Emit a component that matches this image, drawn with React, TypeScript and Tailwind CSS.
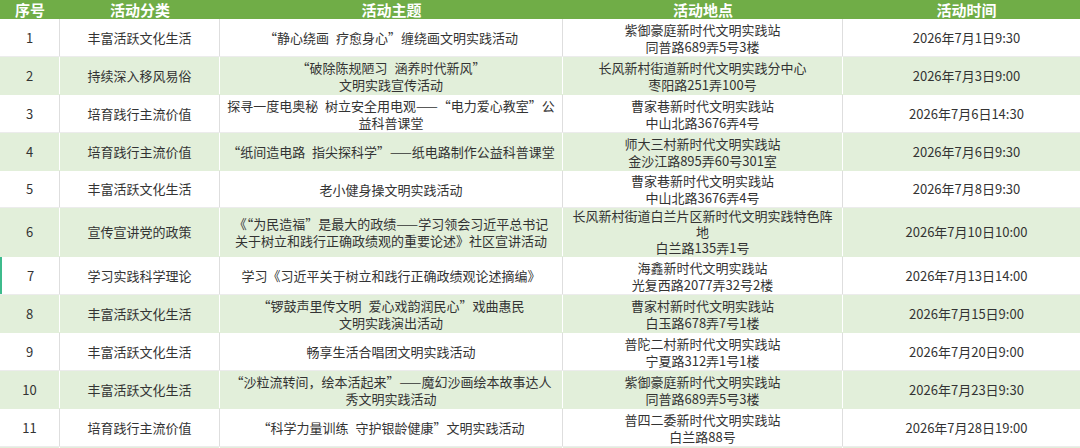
import React from "react";

type Row = {
  no: string;
  cat: string;
  theme: string[];
  place: string[];
  time: string;
  h?: string;
};

const rows: Row[] = [
  { no: "1", cat: "丰富活跃文化生活", theme: ["“静心绕画 疗愈身心”缠绕画文明实践活动"], place: ["紫御豪庭新时代文明实践站", "同普路689弄5号3楼"], time: "2026年7月1日9:30" },
  { no: "2", cat: "持续深入移风易俗", theme: ["“破除陈规陋习 涵养时代新风”", "文明实践宣传活动"], place: ["长风新村街道新时代文明实践分中心", "枣阳路251弄100号"], time: "2026年7月3日9:00" },
  { no: "3", cat: "培育践行主流价值", theme: ["探寻一度电奥秘 树立安全用电观——“电力爱心教室”公", "益科普课堂"], place: ["曹家巷新时代文明实践站", "中山北路3676弄4号"], time: "2026年7月6日14:30" },
  { no: "4", cat: "培育践行主流价值", theme: ["“纸间造电路 指尖探科学”——纸电路制作公益科普课堂"], place: ["师大三村新时代文明实践站", "金沙江路895弄60号301室"], time: "2026年7月6日9:30" },
  { no: "5", cat: "丰富活跃文化生活", theme: ["老小健身操文明实践活动"], place: ["曹家巷新时代文明实践站", "中山北路3676弄4号"], time: "2026年7月8日9:30", h: "h-[37px]" },
  { no: "6", cat: "宣传宣讲党的政策", theme: ["《“为民造福”是最大的政绩——学习领会习近平总书记", "关于树立和践行正确政绩观的重要论述》社区宣讲活动"], place: ["长风新村街道白兰片区新时代文明实践特色阵", "地", "白兰路135弄1号"], time: "2026年7月10日10:00", h: "h-[49px]" },
  { no: "7", cat: "学习实践科学理论", theme: ["学习《习近平关于树立和践行正确政绩观论述摘编》"], place: ["海鑫新时代文明实践站", "光复西路2077弄32号2楼"], time: "2026年7月13日14:00" },
  { no: "8", cat: "丰富活跃文化生活", theme: ["“锣鼓声里传文明 爱心戏韵润民心”戏曲惠民", "文明实践演出活动"], place: ["曹家村新时代文明实践站", "白玉路678弄7号1楼"], time: "2026年7月15日9:00" },
  { no: "9", cat: "丰富活跃文化生活", theme: ["畅享生活合唱团文明实践活动"], place: ["普陀二村新时代文明实践站", "宁夏路312弄1号1楼"], time: "2026年7月20日9:00" },
  { no: "10", cat: "丰富活跃文化生活", theme: ["“沙粒流转间，绘本活起来”——魔幻沙画绘本故事达人", "秀文明实践活动"], place: ["紫御豪庭新时代文明实践站", "同普路689弄5号3楼"], time: "2026年7月23日9:30" },
  { no: "11", cat: "培育践行主流价值", theme: ["“科学力量训练 守护银龄健康”文明实践活动"], place: ["普四二委新时代文明实践站", "白兰路88号"], time: "2026年7月28日19:00" },
];

const cols = "grid grid-cols-[60px_160px_343px_280px_247px]";

const Lines = ({ items }: { items: string[] }) => (
  <div className={`${items.length > 2 ? "leading-[16px]" : "leading-[17px]"} [word-spacing:4px]`}>
    {items.map((t, i) => (
      <div key={i} className="whitespace-nowrap">
        {t}
      </div>
    ))}
  </div>
);

export default function App() {
  return (
    <div
      className="w-[1080px] h-[448px] overflow-hidden bg-white text-[13px] text-[#333]"
      style={{ fontFamily: '"Noto Sans CJK SC", "Noto Sans", sans-serif' }}
    >
      <div className="w-[1090px]">
        {/* header */}
        <div className={`${cols} h-[19px] overflow-hidden bg-[#70ad47] text-white text-[15px] font-bold leading-[19px]`}>
          <div className="text-center">序号</div>
          <div className="text-center">活动分类</div>
          <div className="text-center">活动主题</div>
          <div className="text-center">活动地点</div>
          <div className="text-center">活动时间</div>
        </div>

        {rows.map((r, i) => {
          const green = i % 2 === 1;
          const line = green ? "border-white" : "border-[#dedede]";
          return (
            <div
              key={r.no}
              className={`${cols} ${r.h ?? "h-[38px]"} ${green ? "bg-[#e2efda]" : "bg-white"} border-b ${green ? "border-[#e2efda]" : "border-[#ececec]"}`}
            >
              <div
                className={`flex items-center justify-center border-r ${line} ${r.no === "7" ? "border-l-2 border-l-[#3dbb8c]" : ""}`}
              >
                {r.no}
              </div>
              <div className={`flex items-center justify-center border-r ${line}`}>{r.cat}</div>
              <div className={`flex items-center justify-center text-center border-r ${line}`}>
                <Lines items={r.theme} />
              </div>
              <div className={`flex items-center justify-center text-center border-r ${line}`}>
                <Lines items={r.place} />
              </div>
              <div className="flex items-center justify-center whitespace-nowrap">{r.time}</div>
            </div>
          );
        })}

        <div className={`${cols} h-[38px] bg-[#e2efda]`}>
          <div className="border-r border-white" />
          <div className="border-r border-white" />
          <div className="border-r border-white" />
          <div className="border-r border-white" />
          <div />
        </div>
      </div>
    </div>
  );
}
